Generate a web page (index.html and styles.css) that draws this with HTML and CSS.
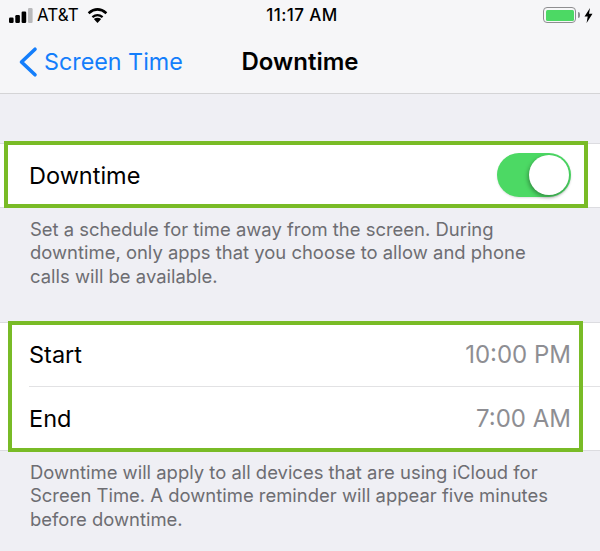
FILE: index.html
```html
<!DOCTYPE html>
<html>
<head>
<meta charset="UTF-8">
<title>Downtime</title>
<link rel="stylesheet" href="styles.css">
</head>
<body>
	<div id="container">
		<header class="top">
			<div class="status">
				<div class="status-left">
					<svg class="signal" width="24" height="15" viewBox="0 0 24 15">
						<rect x="0" y="9.5" width="4.6" height="5.5" rx="1.2" fill="#000"/>
						<rect x="6.3" y="7" width="4.6" height="8" rx="1.2" fill="#000"/>
						<rect x="12.6" y="3.5" width="4.6" height="11.5" rx="1.2" fill="#000"/>
						<rect x="19" y="0" width="4.6" height="15" rx="1.2" fill="#b9b9bb"/>
					</svg>
					<span class="carrier">AT&amp;T</span>
					<svg class="wifi" width="21" height="15" viewBox="0 0 21 15">
						<path d="M10.5 15 L6.8 11 Q10.5 8.3 14.2 11 Z" fill="#000"/>
						<path d="M5.4 9.2 Q10.5 5 15.6 9.2" fill="none" stroke="#000" stroke-width="2.3"/>
						<path d="M1.6 5.2 Q10.5 -2.4 19.4 5.2" fill="none" stroke="#000" stroke-width="2.6"/>
					</svg>
				</div>
				<div class="clock">11:17 AM</div>
				<div class="status-right">
					<div class="battery"><div class="battery-fill"></div></div>
					<div class="battery-cap"></div>
					<svg class="bolt" width="9" height="15" viewBox="0 0 9 15">
						<path d="M6 0 L0.5 8.5 H3.7 L2.6 15 L8.5 5.8 H5 Z" fill="#000"/>
					</svg>
				</div>
			</div>
			<nav class="navbar">
				<div class="back">
					<svg class="chevron" width="20" height="32" viewBox="0 0 20 32">
						<path d="M17 3.2 L3.5 16 L17 28.8" fill="none" stroke="#147efb" stroke-width="3.6" stroke-linecap="round" stroke-linejoin="round"/>
					</svg>
					<span>Screen Time</span>
				</div>
				<div class="nav-title">Downtime</div>
			</nav>
		</header>

		<section class="group first">
			<div class="row">
				<span class="label">Downtime</span>
				<div class="switch"><div class="knob"></div></div>
			</div>
			<div class="highlight hl-toggle"></div>
		</section>
		<p class="note note-top">Set a schedule for time away from the screen. During downtime, only apps that you choose to allow and phone calls will be available.</p>

		<section class="group second">
			<div class="row">
				<span class="label">Start</span>
				<span class="value">10:00 PM</span>
			</div>
			<div class="row row-divided">
				<span class="label">End</span>
				<span class="value">7:00 AM</span>
			</div>
			<div class="highlight hl-times"></div>
		</section>
		<p class="note note-bottom">Downtime will apply to all devices that are using iCloud for Screen Time. A downtime reminder will appear five minutes before downtime.</p>
	</div>
</body>
</html>
```

FILE: styles.css
```css
html, body {
	margin: 0;
	padding: 0;
}

body {
	background-color: #efeff4;
	font-family: Inter, "Liberation Sans", Arial, sans-serif;
	color: #000;
	overflow: hidden;
}

#container {
	width: 600px;
	height: 551px;
	overflow: hidden;
}

/* top bar */
.top {
	height: 93px;
	background-color: #f6f6f8;
	border-bottom: 1px solid #d4d4d6;
}

.status {
	height: 30px;
	display: flex;
	align-items: center;
	justify-content: space-between;
	position: relative;
}

.status-left {
	display: flex;
	align-items: center;
	padding-left: 9px;
}

.carrier {
	font-size: 17px;
	margin-left: 4px;
}

.wifi {
	margin-left: 8px;
}

.clock {
	position: absolute;
	left: 4px;
	right: 0;
	text-align: center;
	font-size: 17px;
	font-weight: 500;
	letter-spacing: 0.4px;
}

.status-right {
	display: flex;
	align-items: center;
	padding-right: 7px;
}

.battery {
	width: 33px;
	height: 16px;
	box-sizing: border-box;
	border: 1.5px solid #8e8e90;
	border-radius: 4px;
	padding: 1.5px;
}

.battery-fill {
	height: 100%;
	background-color: #4cd964;
	border-radius: 1.5px;
}

.battery-cap {
	width: 2px;
	height: 6px;
	background-color: #8e8e90;
	border-radius: 0 2px 2px 0;
	margin-left: 2px;
	margin-right: 4px;
}

.navbar {
	height: 63px;
	display: flex;
	align-items: center;
	justify-content: center;
	position: relative;
}

.back {
	position: absolute;
	left: 18px;
	top: 0;
	bottom: 0;
	display: flex;
	align-items: center;
	color: #147efb;
	font-size: 23.3px;
}

.chevron {
	margin-right: 6px;
}

.nav-title {
	font-size: 24px;
	font-weight: 600;
}

/* table groups */
.group {
	position: relative;
	background-color: #fff;
	border-top: 1px solid #dcdce0;
	border-bottom: 1px solid #dcdce0;
}

.group.first {
	margin-top: 49px;
}

.row {
	height: 63px;
	margin-left: 29px;
	padding-right: 29px;
	display: flex;
	align-items: center;
	justify-content: space-between;
}

.row-divided {
	border-top: 1px solid #e2e2e4;
}

.label {
	font-size: 23.5px;
}

.value {
	font-size: 24px;
	color: #8e8e93;
}

.switch {
	width: 74px;
	height: 44px;
	box-sizing: border-box;
	background-color: #4cd964;
	border-radius: 22px;
	padding: 2px;
	margin-bottom: 2px;
	display: flex;
	justify-content: flex-end;
	box-shadow: 0 1px 2px rgba(0, 0, 0, 0.12);
}

.knob {
	width: 40px;
	height: 40px;
	background-color: #fff;
	border-radius: 50%;
	box-shadow: -1px 2px 4px rgba(0, 0, 0, 0.35);
}

.highlight {
	position: absolute;
	box-sizing: border-box;
	border: 4px solid #79bb26;
}

.hl-toggle {
	left: 4px;
	top: -3px;
	width: 584px;
	height: 67px;
}

.hl-times {
	left: 8px;
	top: -2px;
	width: 575px;
	height: 131px;
}

.note {
	margin: 0;
	box-sizing: border-box;
	padding-left: 30px;
	padding-right: 30px;
	font-size: 18.45px;
	line-height: 23.4px;
	color: #6d6d72;
}

.note-top {
	padding-top: 10px;
	padding-right: 60px;
	height: 114px;
}

.note-bottom {
	padding-top: 10px;
}
```
